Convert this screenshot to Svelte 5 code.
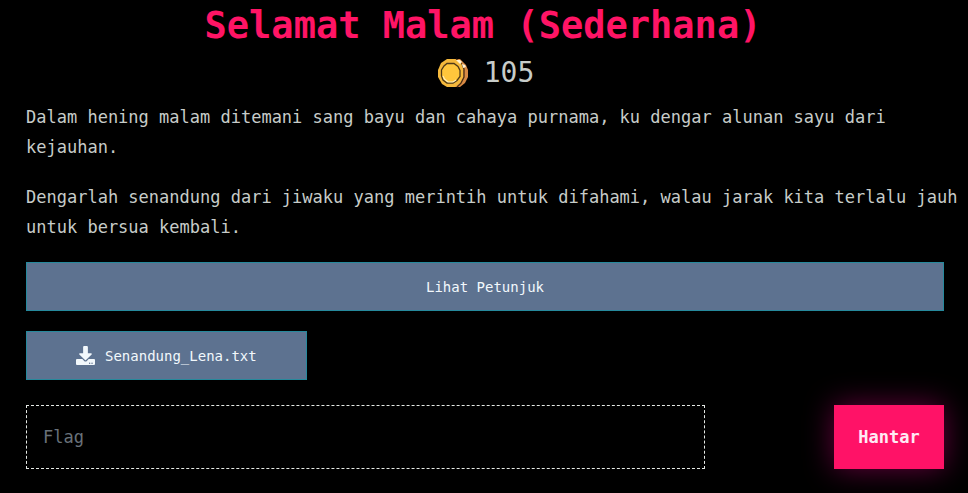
<script>
  let flag = $state('');
  const challenge = {
    title: 'Selamat Malam (Sederhana)',
    points: 105,
    paragraphs: [
      'Dalam hening malam ditemani sang bayu dan cahaya purnama, ku dengar alunan sayu dari kejauhan.',
      'Dengarlah senandung dari jiwaku yang merintih untuk difahami, walau jarak kita terlalu jauh untuk bersua kembali.'
    ],
    file: 'Senandung_Lena.txt'
  };
</script>

<main>
  <h1>{challenge.title}</h1>

  <div class="points">
    <svg class="coin" viewBox="0 0 30 30" aria-hidden="true">
      <path fill="#d98a45" d="M9 1h13l6 6 2 5v7l-3 6-5 4H9z" />
      <path fill="none" stroke="#4a3013" stroke-width="1.300" d="M18 1l5 4 3 6v8l-3 6-4 4" />
      <path fill="#f5b93c" d="M9 1h8l6 4 2 6v8l-3 6-5 4H9l-5-3-4-7v-7l3-7z" />
      <path fill="#ffc63c" stroke="#4f3a18" stroke-width="1.300" d="M9 5.500h7l4 3 2 4v6l-3 4-4 2.500H9l-4-3-1.500-4v-6L6 8z" />
      <path fill="none" stroke="#fff0bb" stroke-width="1.200" d="M5 18l1.500 3L10 24h5l3-2" />
      <path fill="#fff2d4" d="M18 2h4l2 2-2 2zM24 6l3 1 1 2-3 1z" />
    </svg>
    <span>{challenge.points}</span>
  </div>

  <div class="story">
    {#each challenge.paragraphs as text}
      <p>{text}</p>
    {/each}
  </div>

  <button class="panel hint" type="button">Lihat Petunjuk</button>

  <a class="panel file" href="#file" download>
    <svg viewBox="0 0 512 512" aria-hidden="true">
      <path fill="currentColor" d="M216 0h80c13.300 0 24 10.700 24 24v168h87.700c17.800 0 26.700 21.500 14.100 34.100L269.700 378.300c-7.500 7.500-19.800 7.500-27.300 0L90.100 226.100C77.500 213.500 86.400 192 104.200 192H192V24c0-13.300 10.700-24 24-24zm296 376v112c0 13.300-10.700 24-24 24H24c-13.300 0-24-10.700-24-24V376c0-13.300 10.700-24 24-24h146.700l49 49c20.100 20.100 52.500 20.100 72.600 0l49-49H488c13.300 0 24 10.700 24 24zm-124 88c0-11-9-20-20-20s-20 9-20 20 9 20 20 20 20-9 20-20zm64 0c0-11-9-20-20-20s-20 9-20 20 9 20 20 20 20-9 20-20z" />
    </svg>
    <span>{challenge.file}</span>
  </a>

  <form onsubmit={(e) => e.preventDefault()}>
    <input type="text" aria-label="Flag" placeholder="Flag" bind:value={flag} />
    <button class="send" type="submit">Hantar</button>
  </form>
</main>

<style>
  :global(body) {
    margin: 0;
    background: #000;
  }

  main {
    box-sizing: border-box;
    padding: 4px 24px 24px 26px;
    overflow: hidden;
    color: #c7ccc9;
    font: 17px/30px "DejaVu Sans Mono", monospace;
  }

  h1 {
    margin: 0;
    padding-right: 4px;
    color: #ff1465;
    font-size: 37px;
    font-weight: bold;
    line-height: 44px;
    text-align: center;
  }

  .points {
    display: flex;
    align-items: center;
    justify-content: center;
    gap: 16px;
    height: 50px;
    padding-left: 2px;
    font-size: 28px;
  }

  .coin {
    width: 30px;
    height: 30px;
  }

  .story {
    margin: 4px -14px 20px 0;
  }

  p {
    margin: 0 0 20px;
  }

  button,
  input {
    box-sizing: border-box;
    margin: 0;
    border-radius: 0;
    font-family: inherit;
  }

  .panel {
    box-sizing: border-box;
    display: flex;
    align-items: center;
    justify-content: center;
    height: 49px;
    border: 1px solid #26899c;
    background: #5d7290;
    color: #f2f8fc;
    font-size: 14px;
    text-decoration: none;
  }

  .hint {
    width: 100%;
  }

  .file {
    gap: 10px;
    width: fit-content;
    margin-top: 20px;
    padding: 0 49px;
  }

  .file svg {
    width: 19px;
    height: 19px;
  }

  form {
    display: flex;
    justify-content: space-between;
    margin-top: 25px;
  }

  input {
    width: 74%;
    height: 64px;
    padding: 0 16px;
    border: 1px dashed #e5e9e5;
    outline: 0;
    background: transparent;
    color: #c7ccc9;
    font-size: 17px;
  }

  input::placeholder {
    color: #69727a;
    opacity: 1;
  }

  .send {
    width: 110px;
    height: 64px;
    border: 0;
    background: #ff1267;
    box-shadow: 0 0 30px #ff009966;
    color: #ffeaf4;
    font-size: 17px;
    font-weight: bold;
  }
</style>
